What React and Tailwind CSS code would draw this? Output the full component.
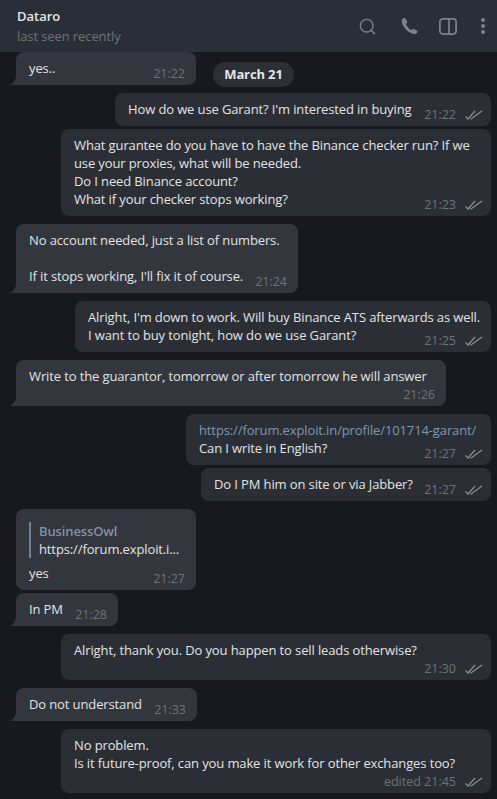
import { Search } from 'lucide-react';

function Checks() {
  return (
    <svg width="18" height="10" viewBox="0 0 18 10" fill="none" stroke="#8a8f95" strokeWidth="1.2" className="shrink-0">
      <path d="M0.5 6.5 L3 9 L10 1" />
      <path d="M5.5 8.5 L6 9 L17 1" />
    </svg>
  );
}

function Tail() {
  return (
    <svg width="14" height="10" viewBox="0 0 14 10" className="absolute bottom-0 left-[-6px]">
      <path d="M6 0 C6 5 3 9 0 10 H14 V0 Z" fill="#33363c" />
    </svg>
  );
}

function Msg({ out, w, time, stacked, tail, gap = 'mt-[3px]', children }) {
  return (
    <div
      className={`relative shrink-0 rounded-lg pl-[13px] pr-2 pt-[7px] text-[13px] leading-[18px] tracking-[-0.12px] whitespace-nowrap text-[#e1e3e5] ${out ? 'self-end bg-[#2b2f35]' : 'self-start bg-[#33363c]'} ${stacked ? 'pb-[21px]' : 'pb-2'} ${gap}`}
      style={{ width: w }}
    >
      {!out && tail && <Tail />}
      {children}
      <div className={`absolute bottom-[3px] flex items-center gap-[9px] text-[12.5px] leading-[16px] tracking-normal text-[#6e7379] ${out ? 'right-[8px]' : 'right-[11px]'}`}>
        <span>{time}</span>
        {out && <Checks />}
      </div>
    </div>
  );
}

export default function App() {
  return (
    <div className="relative flex h-[799px] w-[497px] flex-col overflow-hidden bg-[#17191e] font-['Open_Sans',sans-serif]">
      <header className="relative z-10 flex h-[52px] shrink-0 items-center justify-between bg-[#2a2e37] pl-[17px] pr-[12px]">
        <div>
          <div className="text-[13px] font-semibold leading-[18px] text-[#e4e6e8]">Dataro</div>
          <div className="mt-[2px] text-[13px] leading-[18px] tracking-[-0.1px] text-[#6d7278]">last seen recently</div>
        </div>
        <div className="flex items-center text-[#7e8288]">
          <Search size={19} strokeWidth={1.8} className="mr-[23px]" />
          <svg width="19" height="19" viewBox="0 0 19 19" fill="currentColor" className="mr-[20px]">
            <path d="M3.4 1.2 C2.2 1.7 1.5 2.8 1.7 4.2 C2.4 9.4 7.6 15.8 13.8 17 C15.2 17.3 16.6 16.8 17.2 15.6 C17.6 14.8 17.4 14.1 16.7 13.6 L14.4 12.2 C13.7 11.8 13 11.9 12.4 12.4 L11.6 13.1 C9.4 12.4 6.6 9.4 6 7 L6.8 6.2 C7.3 5.7 7.4 5 7.1 4.3 L5.7 1.9 C5.2 1.1 4.3 0.8 3.4 1.2 Z" />
          </svg>
          <svg width="18" height="17" viewBox="0 0 18 17" fill="none" stroke="currentColor" strokeWidth="1.7" className="mr-[24px]">
            <rect x="0.9" y="0.9" width="16.2" height="15.2" rx="3" />
            <path d="M10 1 V16" />
          </svg>
          <div className="flex flex-col gap-[2px]">
            <span className="h-[4px] w-[4px] rounded-full bg-current" />
            <span className="h-[4px] w-[4px] rounded-full bg-current" />
            <span className="h-[4px] w-[4px] rounded-full bg-current" />
          </div>
        </div>
      </header>

      <div className="absolute left-[213px] top-[62px] z-10 flex h-[25px] w-[81px] items-center justify-center rounded-full bg-[#2c2f35] text-[13px] font-bold tracking-[-0.13px] text-[#e4e6e8]">
        March 21
      </div>

      <main className="flex flex-1 flex-col overflow-hidden pl-4 pr-[6px]">
        <Msg w="180px" time="21:22" tail gap="mt-0">yes..</Msg>
        <Msg out w="376px" time="21:22" gap="mt-2">How do we use Garant? I'm interested in buying</Msg>
        <Msg out w="430px" time="21:23">
          What gurantee do you have to have the Binance checker run? If we<br />
          use your proxies, what will be needed.<br />
          Do I need Binance account?<br />
          What if your checker stops working?
        </Msg>
        <Msg w="282px" time="21:24" tail gap="mt-2">
          No account needed, just a list of numbers.<br />
          <br />
          If it stops working, I'll fix it of course.
        </Msg>
        <Msg out w="416px" time="21:25" gap="mt-2">
          Alright, I'm down to work. Will buy Binance ATS afterwards as well.<br />
          I want to buy tonight, how do we use Garant?
        </Msg>
        <Msg w="430px" time="21:26" tail stacked gap="mt-2">Write to the guarantor, tomorrow or after tomorrow he will answer</Msg>
        <Msg out w="305px" time="21:27" gap="mt-2">
          <span className="text-[#7f97ad]">https://forum.exploit.in/profile/101714-garant/</span><br />
          Can I write in English?
        </Msg>
        <Msg out w="290px" time="21:27">Do I PM him on site or via Jabber?</Msg>
        <Msg w="180px" time="21:27" gap="mt-2">
          <div className="mb-[6px] mt-[6px] border-l-[2px] border-[#6f8299] pl-[8px]">
            <div className="font-semibold text-[#7f93a8]">BusinessOwl</div>
            <div>https://forum.exploit.i...</div>
          </div>
          yes
        </Msg>
        <Msg w="102px" time="21:28" tail>In PM</Msg>
        <Msg out w="430px" time="21:30" stacked gap="mt-2">Alright, thank you. Do you happen to sell leads otherwise?</Msg>
        <Msg w="181px" time="21:33" tail gap="mt-2">Do not understand</Msg>
        <Msg out w="430px" time="edited 21:45" stacked gap="mt-2">
          No problem.<br />
          Is it future-proof, can you make it work for other exchanges too?
        </Msg>
      </main>
    </div>
  );
}
